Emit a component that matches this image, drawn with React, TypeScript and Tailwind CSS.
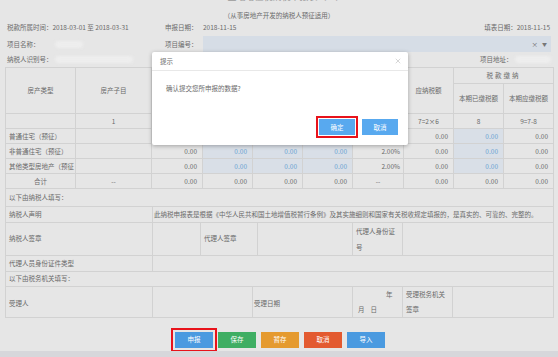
import { X } from 'lucide-react';

const bd = 'border border-[#d2d2d2]';
const blueCell = 'bg-[#d9dfe7] text-[#6a9fd2]';

const rows = [
  { name: '普通住宅（预征）', rate: '' },
  { name: '非普通住宅（预征）', rate: '2.00%' },
  { name: '其他类型房地产（预征', rate: '2.00%' },
];

function Blur({ w }: { w: string }) {
  return <span className={`inline-block h-[7px] ${w} rounded-sm bg-[#eeeeee] blur-[1.5px]`} />;
}

export default function App() {
  return (
    <div className="relative flex h-[357px] w-[558px] flex-col overflow-hidden bg-[#e6e6e6] font-['Noto_Sans_CJK_SC','Liberation_Sans',sans-serif] text-[6.5px] leading-[1.3] text-[#6a6a6a]">
      {/* cut-off title */}
      <div className="flex h-[4px] justify-center overflow-hidden">
        <div className="-mt-[9px] pl-[14px] text-[9px] leading-[11px] text-[#9a9a9a]">土地增值税纳税申报表（一）</div>
      </div>
      <div className="mt-[5px] flex h-[12px] items-center justify-center">（从事房地产开发的纳税人预征适用）</div>

      {/* info rows */}
      <div className="flex h-[13px] items-center px-[7px]">
        <span className="w-[158px]">税款所属时间：2018-03-01 至 2018-03-31</span>
        <span className="w-[38px]">申报日期：</span>
        <span>2018-11-15</span>
        <span className="ml-auto pr-[1px]">填表日期：2018-11-15</span>
      </div>
      <div className="mt-[2px] flex h-[16px] items-center pl-[7px] pr-[7px]">
        <span className="w-[48px]">项目名称：</span>
        <Blur w="w-[28px]" />
        <span className="ml-[82px] w-[38px]">项目编号：</span>
        <div className="flex h-[16px] flex-1 items-center justify-end gap-[4px] bg-[#d6dde6] pr-[4px] text-[#777]">
          <span>×</span>
          <span className="text-[5px]">▼</span>
        </div>
      </div>
      <div className="flex h-[15px] items-center px-[7px]">
        <span className="w-[48px]">纳税人识别号：</span>
        <Blur w="w-[78px]" />
        <span className="ml-auto w-[35px] whitespace-nowrap">项目地址：</span>
        <Blur w="w-[36px]" />
      </div>

      {/* main table */}
      <div className="px-[5px]">
        <table className="w-[548px] table-fixed border-collapse">
          <colgroup>
            <col className="w-[70px]" />
            <col className="w-[76px]" />
            <col className="w-[51px]" />
            <col className="w-[50px]" />
            <col className="w-[50px]" />
            <col className="w-[50px]" />
            <col className="w-[51px]" />
            <col className="w-[50px]" />
            <col className="w-[50px]" />
            <col className="w-[50px]" />
          </colgroup>
          <tbody>
            <tr className="h-[16px]">
              <td rowSpan={2} className={`${bd} text-center`}>房产类型</td>
              <td rowSpan={2} className={`${bd} text-center`}>房产子目</td>
              <td rowSpan={2} className={bd}></td>
              <td rowSpan={2} className={bd}></td>
              <td rowSpan={2} className={bd}></td>
              <td rowSpan={2} className={bd}></td>
              <td rowSpan={2} className={bd}></td>
              <td rowSpan={2} className={`${bd} text-center`}>应纳税额</td>
              <td colSpan={2} className={`${bd} text-center tracking-[2px]`}>税款缴纳</td>
            </tr>
            <tr className="h-[30px]">
              <td className={`${bd} text-center`}>本期已缴税额</td>
              <td className={`${bd} text-center`}>本期应缴税额</td>
            </tr>
            <tr className="h-[15px] text-center">
              <td className={bd}></td>
              <td className={bd}>1</td>
              <td className={bd}></td>
              <td className={bd}></td>
              <td className={bd}></td>
              <td className={bd}></td>
              <td className={bd}></td>
              <td className={bd}>7=2×6</td>
              <td className={bd}>8</td>
              <td className={bd}>9=7-8</td>
            </tr>
            {rows.map((r, i) => (
              <tr key={r.name} className="h-[15px] text-right">
                <td className={`${bd} overflow-hidden whitespace-nowrap px-[3px] text-left`}>{r.name}</td>
                <td className={bd}></td>
                <td className={`${bd} pr-[5px]`}>{i > 0 ? '0.00' : ''}</td>
                <td className={`${bd} ${blueCell} pr-[5px]`}>{i > 0 ? '0.00' : ''}</td>
                <td className={`${bd} ${blueCell} pr-[5px]`}>{i > 0 ? '0.00' : ''}</td>
                <td className={`${bd} ${blueCell} pr-[5px]`}>{i > 0 ? '0.00' : ''}</td>
                <td className={`${bd} pr-[3px]`}>{r.rate}</td>
                <td className={`${bd} pr-[5px]`}>0.00</td>
                <td className={`${bd} ${blueCell} pr-[5px]`}>0.00</td>
                <td className={`${bd} pr-[5px]`}>0.00</td>
              </tr>
            ))}
            <tr className="h-[15px] text-right">
              <td className={`${bd} text-center`}>合计</td>
              <td className={`${bd} text-center`}>--</td>
              <td className={`${bd} pr-[5px]`}>0.00</td>
              <td className={`${bd} pr-[5px]`}>0.00</td>
              <td className={`${bd} pr-[5px]`}>0.00</td>
              <td className={`${bd} pr-[5px]`}>0.00</td>
              <td className={`${bd} text-center`}>--</td>
              <td className={`${bd} pr-[5px]`}>0.00</td>
              <td className={`${bd} pr-[5px]`}>0.00</td>
              <td className={`${bd} pr-[5px]`}>0.00</td>
            </tr>
          </tbody>
        </table>

        <table className="w-[548px] table-fixed border-collapse">
          <colgroup>
            <col className="w-[147px]" />
            <col className="w-[48px]" />
            <col className="w-[52px]" />
            <col className="w-[5px]" />
            <col className="w-[95px]" />
            <col className="w-[50px]" />
            <col className="w-[50px]" />
            <col className="w-[101px]" />
          </colgroup>
          <tbody>
            <tr className="h-[17px]">
              <td colSpan={8} className={`${bd} border-t-0 px-[3px]`}>以下由纳税人填写：</td>
            </tr>
            <tr className="h-[16px]">
              <td className={`${bd} px-[3px]`}>纳税人声明</td>
              <td colSpan={7} className={`${bd} whitespace-nowrap px-[1px]`}>
                此纳税申报表是根据《中华人民共和国土地增值税暂行条例》及其实施细则和国家有关税收规定填报的，是真实的、可靠的、完整的。
              </td>
            </tr>
            <tr className="h-[29px]">
              <td className={`${bd} px-[3px]`}>纳税人签章</td>
              <td className={bd}></td>
              <td colSpan={2} className={`${bd} px-[3px]`}>代理人签章</td>
              <td className={bd}></td>
              <td className={`${bd} px-[3px] leading-[16px]`}>
                代理人身份证
                <br />号
              </td>
              <td colSpan={2} className={bd}></td>
            </tr>
            <tr className="h-[16px]">
              <td className={`${bd} px-[3px]`}>代理人员身份证件类型</td>
              <td colSpan={7} className={bd}></td>
            </tr>
            <tr className="h-[15px]">
              <td colSpan={8} className={`${bd} px-[3px]`}>以下由税务机关填写：</td>
            </tr>
            <tr className="h-[31px]">
              <td className={`${bd} px-[3px] pt-[4px]`}>受理人</td>
              <td colSpan={2} className={bd}></td>
              <td colSpan={2} className={`${bd} px-[1px] pt-[4px]`}>受理日期</td>
              <td className={`${bd} leading-[15px]`}>
                <div className="pl-[33px]">年</div>
                <div className="flex gap-[6px] pl-[5px]">
                  <span>月</span>
                  <span>日</span>
                </div>
              </td>
              <td className={`${bd} px-[3px] leading-[15px]`}>
                受理税务机关
                <br />签章
              </td>
              <td className={bd}></td>
            </tr>
          </tbody>
        </table>
      </div>

      {/* action buttons */}
      <div className="mt-[14px] flex justify-center gap-[5px] pl-[2px] text-white">
        <button className="h-[16px] w-[38px] bg-[#4a9ae0] outline-2 outline-offset-[2px] outline-[#e8131b]">申报</button>
        <button className="h-[16px] w-[38px] bg-[#3fae63]">保存</button>
        <button className="h-[16px] w-[38px] bg-[#e59a2f]">暂存</button>
        <button className="h-[16px] w-[38px] bg-[#e35a30]">取消</button>
        <button className="h-[16px] w-[38px] bg-[#4a9ae0]">导入</button>
      </div>
      <div className="mt-auto h-[6px] bg-[#d7d7db]" />

      {/* confirm dialog */}
      <div className="absolute left-[152px] top-[52px] flex h-[93px] w-[256px] flex-col rounded-[2px] bg-white shadow-[0_1px_4px_rgba(0,0,0,0.3)]">
        <div className="flex h-[19px] items-center justify-between border-b border-[#e8e8e8] pl-[8px] pr-[6px]">
          <span>提示</span>
          <X size={8} strokeWidth={1.2} className="text-[#999]" />
        </div>
        <div className="pl-[14px] pt-[13px]">确认提交您所申报的数据?</div>
        <div className="mt-auto flex justify-end gap-[7px] pb-[10px] pr-[10px] text-white">
          <button className="h-[16px] w-[36px] bg-[#58a9ef] outline-2 outline-offset-[1px] outline-[#e8131b]">确定</button>
          <button className="h-[16px] w-[36px] bg-[#58a9ef]">取消</button>
        </div>
      </div>
    </div>
  );
}
